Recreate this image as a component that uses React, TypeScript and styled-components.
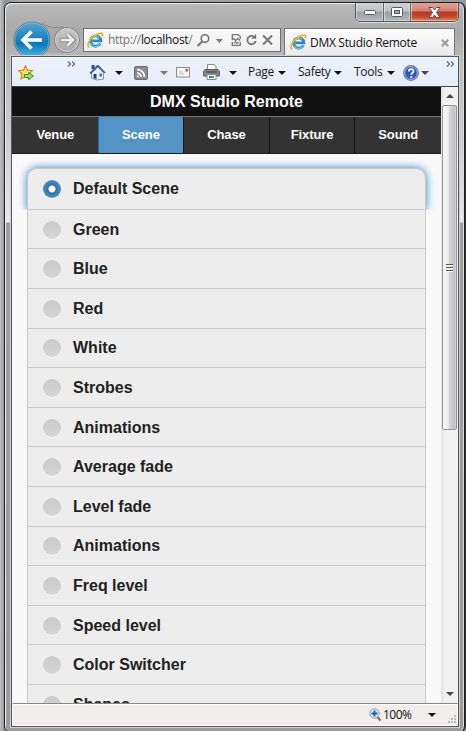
import React from "react";
import styled, { createGlobalStyle, css } from "styled-components";

const Global = createGlobalStyle`
  * { box-sizing: border-box; }
  html, body { margin: 0; height: 731px; overflow: hidden; }
  body { background: linear-gradient(90deg, #b5b7b9, #929496 5px, #999); }
`;

const uiFont = `"Open Sans", "Noto Sans", sans-serif`;

const Desktop = styled.div`
  width: 466px;
  height: 731px;
  padding: 2px 0 0 4px;
  background: linear-gradient(90deg, #c0c2c3 0, #8d9092 5px, #aaa 20px, #999);
  overflow: hidden;
`;

const Window = styled.div`
  width: 461px;
  height: 731px;
  border: 1px solid #1e1e1e;
  border-radius: 7px;
  box-shadow: inset 1px 1px 0 #eeeeee, inset -1px 0 0 #dcdcdc, 1px 0 0 #333;
  padding: 0 6px;
  display: flex;
  flex-direction: column;
  background:
    linear-gradient(180deg, #b9b9b9 0, #a9a9a9 30px, #bababa 55px, #c9c9c9 120px, #e8e8e8 219px, #a0a0a0 220px, #9b9b9b 100%);
`;

const Caption = styled.div`
  height: 18px;
  display: flex;
  justify-content: flex-end;
  flex: none;
`;

const CaptionGroup = styled.div`
  display: flex;
  width: 104px;
  height: 19px;
  margin-right: -1px;
  border: 1px solid #55565a;
  border-top: 0;
  border-radius: 0 0 5px 5px;
  overflow: hidden;
  box-shadow: 0 1px 0 #ddd;
`;

const CaptionButton = styled.div<{ $close?: boolean; $w: number }>`
  width: ${(p) => p.$w}px;
  flex: none;
  display: flex;
  align-items: center;
  justify-content: center;
  border-right: ${(p) => (p.$close ? "0" : "1px solid #66676a")};
  box-shadow: inset 1px 0 0 rgba(255, 255, 255, 0.45), inset -1px -1px 0 rgba(255, 255, 255, 0.35);
  background: ${(p) =>
    p.$close
      ? "linear-gradient(180deg, #e2a399 0, #d08072 8px, #b33a22 9px, #c44a2c 14px, #e08a66 100%)"
      : "linear-gradient(180deg, #d2d3d5 0, #bfc0c2 8px, #a0a1a4 9px, #b6b7b9 100%)"};
`;

const NavRow = styled.div`
  height: 35px;
  display: flex;
  flex: none;
`;

const NavButtons = styled.div`
  width: 72px;
  height: 35px;
  flex: none;
  overflow: hidden;
`;

const AddressBar = styled.div`
  width: 198px;
  height: 24px;
  margin: 7px 3px 0 0;
  border: 1px solid #6f6f6f;
  background: linear-gradient(180deg, #f8f8f8, #f1f1f1);
  display: flex;
  align-items: center;
  padding: 0 4px 0 3px;
  flex: none;
`;

const Url = styled.span`
  width: 89px;
  margin-left: 4px;
  font: 12px/20px ${uiFont};
  letter-spacing: -0.32px;
  color: #777;
  white-space: nowrap;
  b { font-weight: 400; color: #111; }
`;

const Tab = styled.div`
  width: 171px;
  height: 28px;
  margin-top: 7px;
  border: 1px solid #777;
  border-bottom: 0;
  background: linear-gradient(180deg, #fdfdfd, #e9e9ec);
  display: flex;
  align-items: center;
  padding: 0 5px 0 5px;
`;

const TabTitle = styled.span`
  flex: 1;
  margin-left: 3px;
  font: 12px/20px ${uiFont};
  letter-spacing: -0.3px;
  color: #111;
  white-space: nowrap;
`;

const Client = styled.div`
  width: 448px;
  height: 671px;
  flex: none;
  border: 1px solid #55565a;
  box-shadow: 0 0 0 1px #cfcfcf;
  background: #f9f9f9;
  display: flex;
  flex-direction: column;
`;

const CommandBar = styled.div`
  height: 30px;
  flex: none;
  display: flex;
  background: linear-gradient(180deg, #ecf2fb 0, #e5edf9 28px, #cfdbea 29px);
  border-top: 1px solid #f8faff;
  border-bottom: 1px solid #41464d;
`;

const Cell = styled.div<{ $w: number; $top?: number }>`
  width: ${(p) => p.$w}px;
  flex: none;
  padding-top: ${(p) => p.$top ?? 0}px;
  svg { display: block; }
`;

const MenuLabel = styled(Cell)`
  font: 12px/20px ${uiFont};
  letter-spacing: -0.3px;
  color: #15151c;
  white-space: nowrap;
`;

const Body = styled.div`
  height: 616px;
  flex: none;
  display: flex;
`;

const Page = styled.div`
  width: 429px;
  height: 616px;
  overflow: hidden;
  background: #f9f9f9;
  font-family: "Liberation Sans", Arial, sans-serif;
  font-weight: 700;
`;

const Header = styled.div`
  height: 29px;
  background: #111;
  color: #fff;
  font-size: 16px;
  line-height: 29px;
  text-align: center;
`;

const NavBar = styled.div`
  display: grid;
  grid-template-columns: repeat(5, 1fr);
  height: 38px;
  padding-left: 1px;
  border-top: 1px solid #777;
  border-bottom: 1px solid #1c1c1c;
  background: #333;
`;

const NavItem = styled.div<{ $active?: boolean }>`
  color: #fff;
  font-size: 13px;
  letter-spacing: -0.1px;
  line-height: 36px;
  text-align: center;
  border-right: 1px solid #111;
  &:last-child { border-right: 0; }
  ${(p) =>
    p.$active &&
    css`
      background: #5393c5;
      box-shadow: -1px 0 0 #1f6f9f;
    `}
`;

const List = styled.div`
  width: 399px;
  margin: 14px 0 0 15px;
`;

const Option = styled.div<{ $active?: boolean }>`
  height: ${(p) => (p.$active ? 41.8 : 39.6)}px;
  display: flex;
  align-items: center;
  padding: 1px 0 0 15px;
  background: #ededed;
  border: 1px solid #c8c8c8;
  border-top-width: ${(p) => (p.$active ? 1 : 0)}px;
  color: #222;
  font-size: 16px;
  ${(p) =>
    p.$active &&
    css`
      border-radius: 10px 10px 0 0;
      box-shadow: 0 0 9px #2f80cc;
      clip-path: inset(-14px -14px 0 -14px);
    `}
`;

const Radio = styled.span<{ $active?: boolean }>`
  width: 18px;
  height: 18px;
  margin-right: 12px;
  border-radius: 50%;
  flex: none;
  background: ${(p) =>
    p.$active
      ? "radial-gradient(circle, #fff 0 3px, #386d96 4px, #3b7fb2 6px, #4a90c2 9px)"
      : "linear-gradient(180deg, #cacaca, #d6d6d6)"};
  box-shadow: 0 1px 0 #f8f8f8;
`;

const ScrollBar = styled.div`
  width: 17px;
  height: 616px;
  display: flex;
  flex-direction: column;
  background: linear-gradient(90deg, #e3e3e3, #f0f0f0 4px, #f2f2f2);
`;

const Arrow = styled.div<{ $down?: boolean }>`
  height: 18px;
  flex: none;
  padding: 7px 0 0 5px;
  svg { display: block; transform: ${(p) => (p.$down ? "rotate(180deg)" : "none")}; }
`;

const Thumb = styled.div`
  width: 15px;
  height: 325px;
  margin-left: 1px;
  border: 1px solid #949494;
  border-radius: 2px;
  background: linear-gradient(90deg, #f7f7f7 0, #ededee 5px, #d2d2d6 7px, #c0c0c7 12px, #e4e4e6 13px);
  display: flex;
  align-items: center;
  justify-content: center;
`;

const Spacer = styled.div`
  flex: 1;
`;

const StatusBar = styled.div`
  height: 23px;
  flex: none;
  display: flex;
  align-items: flex-start;
  border: 1px solid #fff;
  border-top: 1px solid #888;
  box-shadow: inset 0 1px 0 #fff;
  background: #f0edec;
`;

const Zoom = styled.span`
  width: 45px;
  margin-left: 1px;
  font: 12px/21px ${uiFont};
  letter-spacing: -0.5px;
  color: #111;
`;

const Ie = () => (
  <svg width="17" height="17" viewBox="0 0 18 18" fill="none">
    <path d="M14.2 12.1A5.500 5.500 0 1 1 14.800 9.400H5.600" stroke="#2f87c4" strokeWidth="3" />
    <path d="M14 12.500A5.400 5.400 0 0 1 4 11.500" stroke="#67c3ee" strokeWidth="1.200" />
    <path d="M4.600 7.500A5.300 5.300 0 0 1 12.800 5.500" stroke="#67b9e6" strokeWidth="1.200" />
    <path d="M2.300 16.200C-.5 14.500 2 8.400 7.200 4.500c4-3 8.300-4.200 9.300-2.400.4.700.2 1.600-.2 2.500" stroke="#edb51c" strokeWidth="1.800" />
  </svg>
);

const Down = ({ c = "#15151c" }: { c?: string }) => (
  <svg width="8" height="4" viewBox="0 0 8 4"><path d="M0 0h8L4 4z" fill={c} /></svg>
);

const Chevrons = () => (
  <svg width="9" height="6" viewBox="0 0 9 6" fill="none" stroke="#5963a5" strokeWidth="1.200">
    <path d="M1 .5 3.500 3 1 5.500M5 .5 7.500 3 5 5.500" />
  </svg>
);

const BackForward = () => (
  <svg width="72" height="35" viewBox="11 21 72 35" fill="none">
    <defs>
      <linearGradient id="blue" x1="0" y1="0" x2="0" y2="1">
        <stop offset="0" stopColor="#58a9d3" /><stop offset=".45" stopColor="#1c82bd" />
        <stop offset=".6" stopColor="#0b79b9" /><stop offset="1" stopColor="#45bde8" />
      </linearGradient>
      <linearGradient id="grey" x1="0" y1="0" x2="0" y2="1">
        <stop offset="0" stopColor="#c9c9c9" /><stop offset="1" stopColor="#aaa" />
      </linearGradient>
    </defs>
    <path d="M44 24c6 4 10 4 20 3v26H44z" fill="#a9a9a9" />
    <path d="M42 23c7 5 12 5 22 4" stroke="#888" />
    <circle cx="32" cy="40" r="18" fill="url(#blue)" stroke="#707b82" />
    <circle cx="32" cy="40" r="17" stroke="#8cc6e2" strokeOpacity=".6" />
    <path d="M42 40H24M31.500 31.500 23 40l8.500 8.500" stroke="#fff" strokeWidth="3.600" />
    <circle cx="67" cy="40" r="12.500" fill="url(#grey)" stroke="#7d7d7d" />
    <circle cx="67" cy="40" r="11.500" stroke="#d2d2d2" />
    <path d="M60 40h12M67.500 34.500 73 40l-5.500 5.500" stroke="#888" strokeWidth="4.600" />
    <path d="M60.800 40h11M67.500 34.500 73 40l-5.500 5.500" stroke="#eee" strokeWidth="2.600" />
  </svg>
);

const AddressTools = () => (
  <svg width="80" height="16" viewBox="197 32 80 16" fill="none" stroke="#777">
    <circle cx="206" cy="38.500" r="3.800" strokeWidth="1.700" /><path d="m203.200 41.500-4.700 4.500" strokeWidth="2.300" />
    <path d="M217 39h7l-3.500 4z" fill="#777" stroke="none" />
    <path d="M233.500 39v-4.500h6l2 2V39M233.500 42v3.500h8V42M233 40l2-1.500 2 2 2-2 2.500 2M235 43l1.500-1 1.500 1.500 2-1.500" strokeWidth="1.300" />
    <path d="M256 37.200A4.200 4.200 0 1 0 257 41" strokeWidth="1.800" /><path d="M252.500 38.700h5v-5z" fill="#777" stroke="none" />
    <path d="m264.500 35.500 9 9m0-9-9 9" strokeWidth="2" />
  </svg>
);

const Star = () => (
  <svg width="17" height="16" viewBox="0 0 17 16">
    <path d="m7.500.8 1.900 4.400 4.900.5-3.600 3.300 1 4.800-4.200-2.400L3 13.800 4.200 9 .6 5.700l4.900-.5z" fill="#ffe178" stroke="#d68b0c" strokeWidth="1.200" />
    <path d="M6.500 9.500h4V7.500l5 3.500-5 3.500v-2h-4z" fill="#9be36a" stroke="#2b9420" />
  </svg>
);

const House = () => (
  <svg width="17" height="17" viewBox="0 0 17 17">
    <path d="M2.500 1h3v4h-3z" fill="#2e43c0" />
    <path d="M2.500 8.500 8.500 3l6 5.500V15l-6.500 1-5.500-2z" fill="#edf1f8" stroke="#8292a9" />
    <path d="m.5 9 7-7.500 2-.5 7 7.500-1.500.8L9 3 2 10z" fill="#3f54a6" />
    <path d="M4.500 10h3v5l-3-1z" fill="#233d82" /><path d="M10.500 9.500H13v3h-2.500z" fill="#3e6eb5" />
  </svg>
);

const Rss = () => (
  <svg width="14" height="14" viewBox="0 0 14 14" fill="none" stroke="#fff">
    <rect x=".5" y=".5" width="13" height="13" rx="1.500" fill="#8b8b8b" stroke="#6e6e6e" />
    <path d="M3 7a4 4 0 0 1 4 4M3 3.500A7.500 7.500 0 0 1 10.500 11" strokeWidth="1.700" />
    <circle cx="4" cy="10.200" r="1" fill="#fff" stroke="none" />
  </svg>
);

const Mail = () => (
  <svg width="14" height="11" viewBox="0 0 14 11">
    <rect x=".5" y=".5" width="13" height="9.500" fill="#faf8f4" stroke="#8c8c8c" />
    <path d="M3 5h4M3 7h5" stroke="#bbb" /><path d="M9.500 2h2.500v2.500H9.500z" fill="#d04a39" />
  </svg>
);

const Printer = () => (
  <svg width="17" height="16" viewBox="0 0 17 16">
    <path d="M4.500 6V.5h7L13 2v4" fill="#fff" stroke="#888" />
    <path d="M2 5.500h13l1.500 2V12H.5V7.500z" fill="#85878a" stroke="#5d5e60" />
    <path d="M3 8h11" stroke="#333" /><path d="M4 10.500h9v5H4z" fill="#fff" stroke="#888" />
    <path d="M6 12h3v2H6z" fill="#2c80b7" /><path d="M9 12h2v2H9z" fill="#54a45b" />
  </svg>
);

const Help = () => (
  <svg width="16" height="16" viewBox="0 0 16 16">
    <circle cx="8" cy="8" r="7.300" fill="#2b57ba" stroke="#777e8d" strokeWidth="1.200" />
    <circle cx="8" cy="8" r="6.300" fill="none" stroke="#a9bce7" />
    <path d="M5.800 6.500c0-3.100 4.700-3 4.700-.3C10.500 8 8.200 8 8.200 9.800" fill="none" stroke="#fff" strokeWidth="1.700" />
    <path d="M7.300 11h1.900v1.800H7.300z" fill="#fff" />
  </svg>
);

const Magnifier = () => (
  <svg width="13" height="14" viewBox="0 0 13 14" fill="none">
    <path d="m8 8.500 3.500 4" stroke="#a86b3d" strokeWidth="2.500" />
    <circle cx="5.500" cy="5.500" r="4.700" fill="#d9ecfa" stroke="#8a9dac" />
    <path d="M5.500 2.500v6m-3-3h6" stroke="#1763b8" strokeWidth="2" />
  </svg>
);

const ScrollArrow = () => (
  <svg width="8" height="4" viewBox="0 0 8 4"><path d="M0 4 4 0l4 4z" fill="#444" /></svg>
);

const scenes = ["Default Scene", "Green", "Blue", "Red", "White", "Strobes", "Animations", "Average fade", "Level fade", "Animations", "Freq level", "Speed level", "Color Switcher", "Shapes"];
const tabs = ["Venue", "Scene", "Chase", "Fixture", "Sound"];

export default function App() {
  return (
    <Desktop>
      <Global />
      <Window>
        <Caption>
          <CaptionGroup>
            <CaptionButton $w={28}>
              <svg width="12" height="5"><rect x=".5" y=".5" width="11" height="4" rx="1" fill="#fff" stroke="#555a68" /></svg>
            </CaptionButton>
            <CaptionButton $w={27}>
              <svg width="12" height="10"><rect x=".5" y=".5" width="11" height="9" rx="1" fill="#fff" stroke="#555a68" /><rect x="3.500" y="3.500" width="5" height="3" fill="#aaa" stroke="#555a68" /></svg>
            </CaptionButton>
            <CaptionButton $w={47} $close>
              <svg width="13" height="11" viewBox="0 0 13 11"><path d="M1 .5h3.500l2 2.500 2-2.500H12L8.500 5.500 12 10.500H8.500l-2-2.500-2 2.500H1l3.500-5z" fill="#fff" stroke="#594a52" /></svg>
            </CaptionButton>
          </CaptionGroup>
        </Caption>
        <NavRow>
          <NavButtons><BackForward /></NavButtons>
          <AddressBar>
            <Ie />
            <Url>http://<b>localhost</b>/</Url>
            <AddressTools />
          </AddressBar>
          <Tab>
            <Ie />
            <TabTitle>DMX Studio Remote</TabTitle>
            <svg width="8" height="8" viewBox="0 0 8 8"><path d="m.8.8 6.400 6.400m0-6.400L.8 7.200" stroke="#999" strokeWidth="2" /></svg>
          </Tab>
        </NavRow>
        <Client>
          <CommandBar>
            <Cell $w={6} />
            <Cell $w={49} $top={7}><Star /></Cell>
            <Cell $w={22} $top={3}><Chevrons /></Cell>
            <Cell $w={26} $top={6}><House /></Cell>
            <Cell $w={19} $top={13}><Down /></Cell>
            <Cell $w={26} $top={8}><Rss /></Cell>
            <Cell $w={16} $top={13}><Down c="#777" /></Cell>
            <Cell $w={27} $top={9}><Mail /></Cell>
            <Cell $w={26} $top={6}><Printer /></Cell>
            <Cell $w={19} $top={13}><Down /></Cell>
            <MenuLabel $w={30} $top={4}>Page</MenuLabel>
            <Cell $w={20} $top={13}><Down /></Cell>
            <MenuLabel $w={36} $top={4}>Safety</MenuLabel>
            <Cell $w={20} $top={13}><Down /></Cell>
            <MenuLabel $w={33} $top={4}>Tools</MenuLabel>
            <Cell $w={16} $top={13}><Down /></Cell>
            <Cell $w={18} $top={7}><Help /></Cell>
            <Cell $w={25} $top={13}><Down c="#444" /></Cell>
            <Cell $w={9} $top={3}><Chevrons /></Cell>
          </CommandBar>
          <Body>
            <Page>
              <Header>DMX Studio Remote</Header>
              <NavBar>{tabs.map((t) => <NavItem key={t} $active={t === "Scene"}>{t}</NavItem>)}</NavBar>
              <List>
                {scenes.map((s, i) => (
                  <Option key={i} $active={i === 0}><Radio $active={i === 0} />{s}</Option>
                ))}
              </List>
            </Page>
            <ScrollBar>
              <Arrow><ScrollArrow /></Arrow>
              <Thumb>
                <svg width="7" height="9"><path d="M0 1.500h7M0 4.500h7M0 7.500h7" stroke="#555" /><path d="M0 2.500h7M0 5.500h7M0 8.500h7" stroke="#fff" /></svg>
              </Thumb>
              <Spacer />
              <Arrow $down><ScrollArrow /></Arrow>
            </ScrollBar>
          </Body>
          <StatusBar>
            <Cell $w={356} />
            <Cell $w={13} $top={4}><Magnifier /></Cell>
            <Zoom>100%</Zoom>
            <Cell $w={20} $top={9}><Down /></Cell>
            <Cell $w={9} $top={11}>
              <svg width="9" height="9" fill="#bbb"><path d="M6 0h2v2H6zM3 3h2v2H3zM6 3h2v2H6zM0 6h2v2H0zM3 6h2v2H3zM6 6h2v2H6z" /></svg>
            </Cell>
          </StatusBar>
        </Client>
      </Window>
    </Desktop>
  );
}
